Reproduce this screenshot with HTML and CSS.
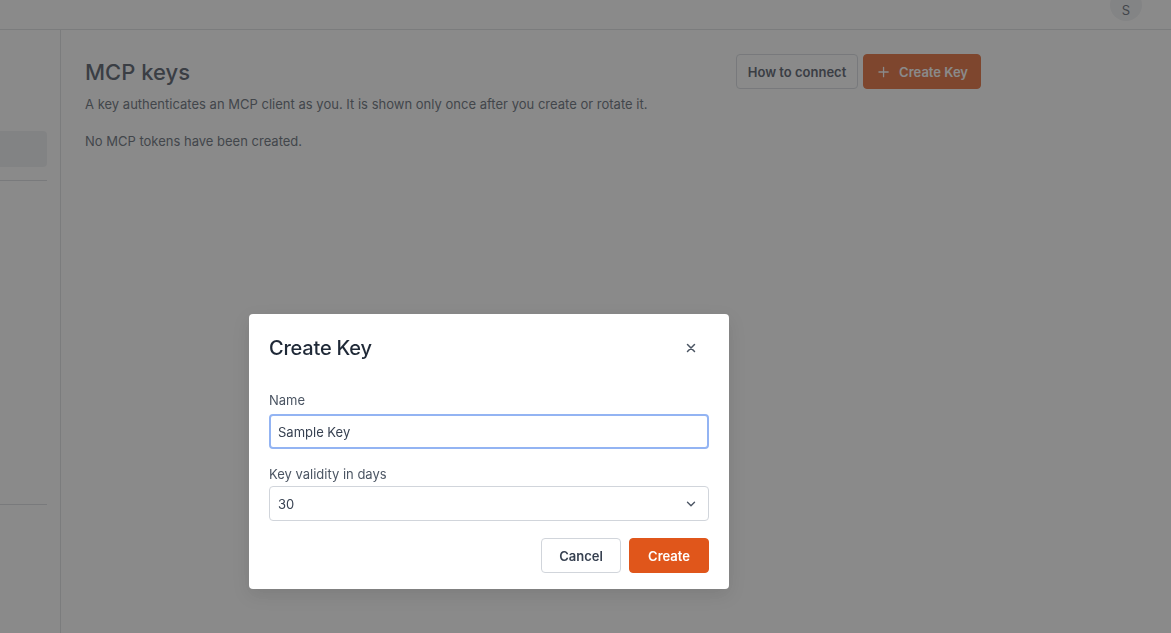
FILE: index.html
```html
<!DOCTYPE html>
<html lang="en">
<head>
<meta charset="utf-8">
<title>MCP keys</title>
<link rel="stylesheet" href="styles.css">
</head>
<body>
<div class="app">
  <header class="topbar">
    <div class="avatar">S</div>
  </header>
  <div class="layout">
    <aside class="sidebar">
      <div class="side-item active"></div>
      <hr class="side-sep first">
      <hr class="side-sep second">
    </aside>
    <main class="main">
      <div class="content">
        <div class="page-head">
          <div class="page-title-block">
            <h1 class="page-title">MCP keys</h1>
            <p class="page-desc">A key authenticates an MCP client as you. It is shown only once after you create or rotate it.</p>
          </div>
          <div class="page-actions">
            <button class="btn btn-outline">How to connect</button>
            <button class="btn btn-primary"><svg class="plus" width="12" height="12" viewBox="0 0 12 12"><path d="M6 1v10M1 6h10" stroke="currentColor" stroke-width="1.4" stroke-linecap="round"/></svg>Create Key</button>
          </div>
        </div>
        <p class="empty">No MCP tokens have been created.</p>
      </div>
    </main>
  </div>
</div>

<div class="overlay">
  <div class="modal" role="dialog">
    <div class="modal-head">
      <h2 class="modal-title">Create Key</h2>
      <button class="close" aria-label="Close"><svg width="10" height="10" viewBox="0 0 10 10"><path d="M1.5 1.5l7 7M8.5 1.5l-7 7" stroke="currentColor" stroke-width="1.5" stroke-linecap="round"/></svg></button>
    </div>
    <div class="field">
      <label class="label">Name</label>
      <div class="input focused">Sample Key</div>
    </div>
    <div class="field field-select">
      <label class="label">Key validity in days</label>
      <div class="input select"><span>30</span><svg width="10" height="6" viewBox="0 0 10 6"><path d="M1.5 1.2l3.5 3.5 3.5-3.5" fill="none" stroke="currentColor" stroke-width="1.4" stroke-linecap="round" stroke-linejoin="round"/></svg></div>
    </div>
    <div class="modal-actions">
      <button class="btn btn-outline wide">Cancel</button>
      <button class="btn btn-primary wide">Create</button>
    </div>
  </div>
</div>
</body>
</html>
```

FILE: styles.css
```css
* { box-sizing: border-box; }
html, body { margin: 0; height: 100%; }
body {
  font-family: Inter, "Noto Sans", sans-serif;
  color: #374151;
  background: #fff;
  overflow: hidden;
}
.app { display: flex; flex-direction: column; height: 100vh; }
.topbar {
  height: 30px;
  border-bottom: 1px solid #dadbdf;
  display: flex;
  justify-content: flex-end;
  padding-right: 29px;
  flex-shrink: 0;
}
.avatar {
  width: 32px; height: 32px;
  margin-top: -11px;
  border-radius: 50%;
  background: #eef0f2;
  color: #4b5563;
  font-size: 13px;
  display: flex; align-items: center; justify-content: center;
  padding-top: 10px;
  line-height: 1;
}
.layout { display: flex; flex: 1; min-height: 0; }
.sidebar {
  width: 61px;
  border-right: 1px solid #dadbdf;
  flex-shrink: 0;
  padding-right: 13px;
  padding-top: 101px;
}
.side-item.active {
  height: 36px;
  background: #eceef1;
  border-radius: 0 4px 4px 0;
}
.side-sep { border: 0; border-top: 1px solid #d5d7db; margin: 0; }
.side-sep.first { margin-top: 13px; }
.side-sep.second { margin-top: 323px; }
.main { flex: 1; padding: 24px 24px; }
.content { max-width: 896px; }
.page-head { display: flex; justify-content: space-between; align-items: flex-start; }
.page-title { margin: 3px 0 0; font-size: 22px; font-weight: 500; color: #374151; line-height: 30px; }
.page-desc { margin: 8px 0 0; font-size: 13px; color: #4b5563; line-height: 18px; letter-spacing: 0.01px; }
.empty { margin: 19px 0 0; font-size: 13px; color: #4b5563; line-height: 18px; }
.page-actions { display: flex; gap: 5px; padding-top: 0; }
.btn {
  font-family: inherit;
  font-size: 13px;
  font-weight: 600;
  height: 35px;
  border-radius: 4px;
  padding: 0 12px;
  display: inline-flex; align-items: center; justify-content: center;
  white-space: nowrap;
  cursor: pointer;
}
.btn-outline { background: #fff; border: 1px solid #d1d5db; color: #374151; }
.btn-primary { background: #e0561b; border: 1px solid #e0561b; color: #fff; }
.btn-primary .plus { margin-right: 10px; margin-left: 2px; }
.page-actions .btn-outline { width: 122px; }
.page-actions .btn-primary { width: 118px; }

.overlay {
  position: fixed; inset: 0;
  background: rgba(60, 60, 60, 0.6);
  display: flex; align-items: flex-start; justify-content: flex-start;
  padding: 314px 0 0 249px;
}
.modal {
  width: 480px;
  background: #fff;
  border-radius: 4px;
  padding: 20px 20px 16px;
  box-shadow: 0 6px 18px rgba(0,0,0,0.1);
}
.modal-head { display: flex; justify-content: space-between; align-items: center; height: 28px; }
.modal-title { margin: 0; font-size: 20px; font-weight: 500; color: #1f2937; letter-spacing: -0.2px; }
.close { background: none; border: 0; padding: 4px; color: #4b5563; display: flex; margin-right: 9px; }
.field { margin-top: 30px; }
.field + .field { margin-top: 17px; }
.label { display: block; font-size: 13px; color: #4b5563; line-height: 16px; margin-bottom: 6px; }
.field-select .label { margin-bottom: 4px; }
.input {
  height: 35px;
  border: 1px solid #d1d5db;
  border-radius: 4px;
  padding: 0 8px;
  font-size: 13px;
  color: #374151;
  display: flex; align-items: center;
}
.input.focused { border: 2px solid #93b4f3; padding-left: 7px; }
.select { justify-content: space-between; padding-right: 12px; }
.select svg { color: #4b5563; }
.modal-actions { display: flex; justify-content: flex-end; gap: 8px; margin-top: 17px; }
.btn.wide { width: 80px; }
```
